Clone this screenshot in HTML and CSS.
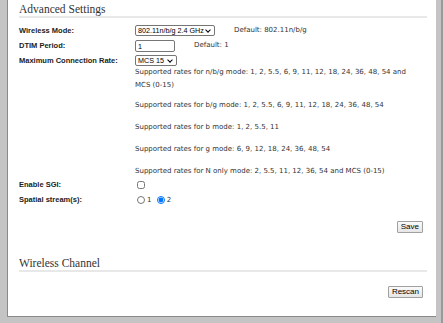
FILE: index.html
```html
<!DOCTYPE html>
<html lang="en">
<head>
    <meta charset="UTF-8">
    <title>Advanced Settings</title>
    <link rel="stylesheet" href="styles.css">
</head>
<body>

<div class="frame">
    <div class="panel">
        <h2>Advanced Settings</h2>

        <div class="row">
            <label for="mode">Wireless Mode:</label>
            <div class="value">
                <span class="select-wrap">
                    <select id="mode" class="sel-mode">
                        <option>802.11n/b/g 2.4 GHz</option>
                    </select>
                </span><span class="hint hint-mode">Default: 802.11n/b/g</span>
            </div>
        </div>

        <div class="row">
            <label for="dtim">DTIM Period:</label>
            <div class="value">
                <input type="text" id="dtim" value="1"><span class="hint hint-dtim">Default: 1</span>
            </div>
        </div>

        <div class="row">
            <label for="rate">Maximum Connection Rate:</label>
            <div class="value">
                <span class="select-wrap">
                    <select id="rate" class="sel-rate">
                        <option>MCS 15</option>
                    </select>
                </span>
                <div class="rates">
                    <p>Supported rates for n/b/g mode: 1, 2, 5.5, 6, 9, 11, 12, 18, 24, 36, 48, 54 and MCS (0-15)</p>
                    <p>Supported rates for b/g mode: 1, 2, 5.5, 6, 9, 11, 12, 18, 24, 36, 48, 54</p>
                    <p>Supported rates for b mode: 1, 2, 5.5, 11</p>
                    <p>Supported rates for g mode: 6, 9, 12, 18, 24, 36, 48, 54</p>
                    <p>Supported rates for N only mode: 2, 5.5, 11, 12, 36, 54 and MCS (0-15)</p>
                </div>
            </div>
        </div>

        <div class="row">
            <label for="sgi">Enable SGI:</label>
            <div class="value">
                <input type="checkbox" id="sgi">
            </div>
        </div>

        <div class="row">
            <label>Spatial stream(s):</label>
            <div class="value radios">
                <input type="radio" name="ss" id="ss1"><span>1</span>
                <input type="radio" name="ss" id="ss2" checked><span>2</span>
            </div>
        </div>

        <div class="actions save">
            <button type="button">Save</button>
        </div>

        <h2 class="second">Wireless Channel</h2>

        <div class="actions rescan">
            <button type="button">Rescan</button>
        </div>
    </div>
</div>

</body>
</html>
```

FILE: styles.css
```css
html, body {
    margin: 0;
    height: 100%;
}

body {
    background-color: #c4c4c4;
    font-family: "DejaVu Sans", Verdana, sans-serif;
    color: #333;
    overflow: hidden;
}

.frame {
    padding: 0 5px 6px 7px;
    height: 100%;
    box-sizing: border-box;
    border-right: 2px solid #9a9a9a;
}

.panel {
    background-color: #fff;
    border-left: 1px solid #8a8a8a;
    border-bottom: 1px solid #8a8a8a;
    height: 100%;
    box-sizing: border-box;
    padding: 0 9px 0 11px;
}

h2 {
    font-family: "Liberation Serif", "Times New Roman", serif;
    font-weight: normal;
    font-size: 11.5px;
    line-height: 13px;
    color: #333;
    margin: 0 0 7px;
    padding: 3px 0 0;
    border-bottom: 2px solid #e8e8e8;
}

h2.second {
    margin-top: 21px;
}

.row {
    display: flex;
    align-items: flex-start;
    min-height: 15px;
}

.row label {
    width: 116px;
    flex-shrink: 0;
    font-family: "Liberation Sans", Arial, sans-serif;
    font-weight: bold;
    font-size: 7.5px;
    line-height: 12px;
    color: #222;
}

.value {
    flex: 1;
    font-size: 7px;
    line-height: 12px;
}

.select-wrap {
    position: relative;
    display: inline-block;
    vertical-align: top;
}

.select-wrap::after {
    content: "";
    position: absolute;
    top: 3px;
    right: 5px;
    width: 3px;
    height: 3px;
    border-right: 1.5px solid #000;
    border-bottom: 1.5px solid #000;
    transform: rotate(45deg);
    pointer-events: none;
}

select, input[type="text"] {
    font-family: "Liberation Sans", Arial, sans-serif;
    font-size: 7.2px;
    height: 11px;
    padding: 0 2px;
    border: 1px solid #767676;
    border-radius: 2px;
    box-sizing: border-box;
    vertical-align: top;
    color: #000;
    background: #fff;
    margin: 0;
}

select {
    appearance: none;
    -webkit-appearance: none;
    display: block;
}

.sel-mode {
    width: 80px;
}

.sel-rate {
    width: 42px;
}

input[type="text"] {
    width: 40px;
    height: 12px;
    margin-bottom: 2px;
}

.hint {
    vertical-align: top;
    line-height: 11px;
}

.hint-mode {
    margin-left: 19px;
}

.hint-dtim {
    margin-left: 19px;
}

.rates {
    margin-top: -1px;
    padding-right: 10px;
    line-height: 13px;
}

.rates p {
    margin: 0 0 9px;
}

.rates p:first-child {
    margin-bottom: 7px;
}

.rates p:last-child {
    margin-bottom: 1px;
}

input[type="checkbox"], input[type="radio"] {
    width: 8px;
    height: 8px;
    margin: 2px 2px 0;
    vertical-align: top;
}

.radios {
    line-height: 12px;
}

.radios span {
    margin-right: 1px;
}

.actions {
    display: flex;
    justify-content: flex-end;
    padding-right: 4px;
}

.actions.save {
    margin-top: 12px;
}

.actions.rescan {
    margin-top: 14px;
}

button {
    font-family: "Liberation Sans", Arial, sans-serif;
    font-size: 8px;
    height: 12px;
    line-height: 10px;
    padding: 0 3px;
    border: 1px solid #a0a0a0;
    border-radius: 1px;
    background: linear-gradient(#fafafa, #e6e6e6);
    color: #000;
    cursor: pointer;
}
```
